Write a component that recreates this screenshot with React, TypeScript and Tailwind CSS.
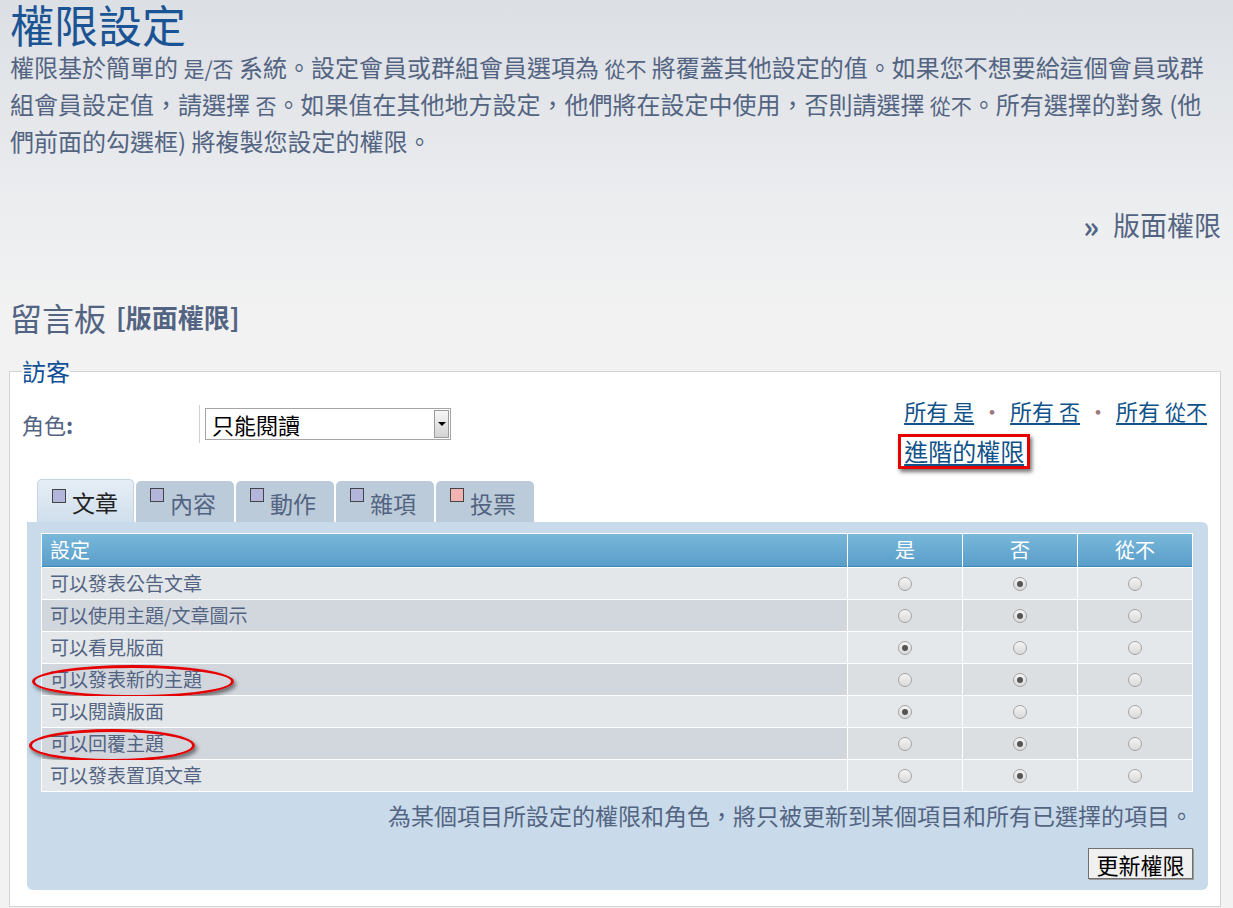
import React from "react"

const rows: { label: string; value: number; circled?: boolean }[] = [
  { label: "可以發表公告文章", value: 1 },
  { label: "可以使用主題/文章圖示", value: 1 },
  { label: "可以看見版面", value: 0 },
  { label: "可以發表新的主題", value: 1, circled: true },
  { label: "可以閱讀版面", value: 0 },
  { label: "可以回覆主題", value: 1, circled: true },
  { label: "可以發表置頂文章", value: 1 },
]

const tabs = [
  { name: "文章", color: "bg-[#b3b5da]" },
  { name: "內容", color: "bg-[#b3b5da]" },
  { name: "動作", color: "bg-[#b3b5da]" },
  { name: "雜項", color: "bg-[#b3b5da]" },
  { name: "投票", color: "bg-[#f2b3b3]" },
]

function Radio({ checked }: { checked: boolean }) {
  return (
    <span className="flex h-[14px] w-[14px] items-center justify-center rounded-full border border-[#a3a3a3] bg-[linear-gradient(to_bottom,#f4f4f4,#dadada)]">
      {checked && <span className="h-[6px] w-[6px] rounded-full bg-[#555]" />}
    </span>
  )
}

function Samp({ children }: { children: React.ReactNode }) {
  return <span className="text-[21px]">{children}</span>
}

export default function App() {
  return (
    <div className="min-h-screen bg-[linear-gradient(to_bottom,#dcdfe4_0px,#eceef0_220px,#f2f2f2_320px)] pl-[9px] pr-[12px] font-['Noto_Sans_CJK_TC','Noto_Sans',sans-serif] text-[#536482]">
      <h1 className="pl-px text-[44px] leading-[48px] text-[#1b5494]">權限設定</h1>
      <p className="mt-px pl-px text-[24px] leading-[36px]">
        權限基於簡單的 <Samp>是/否</Samp> 系統。設定會員或群組會員選項為 <Samp>從不</Samp>{" "}
        將覆蓋其他設定的值。如果您不想要給這個會員或群組會員設定值，請選擇 <Samp>否</Samp>
        。如果值在其他地方設定，他們將在設定中使用，否則請選擇 <Samp>從不</Samp>
        。所有選擇的對象 (他們前面的勾選框) 將複製您設定的權限。
      </p>

      <div className="mt-[46px] flex h-[40px] items-center justify-end text-[27px] leading-[40px]">
        <span className="mr-[14px] text-[30px] font-bold">»</span>
        <span>版面權限</span>
      </div>

      <h2 className="mt-[52px] flex h-[40px] items-center pl-px leading-[40px]">
        <span className="text-[32px]">留言板</span>
        <span className="ml-[10px] text-[26px] font-bold">[版面權限]</span>
      </h2>

      <fieldset className="mt-[21px] border border-[#d3d3d3] bg-white pb-[16px] pl-[12px] pr-[12px]">
        <legend className="text-[24px] leading-[26px] text-[#115098]">訪客</legend>

        <div className="mt-[12px] flex items-start justify-between">
          <div className="mt-[9px] flex items-center">
            <span className="w-[177px] text-[22px]">
              角色<span className="font-bold">:</span>
            </span>
            <span className="h-[38px] w-px bg-[#d0d0d0]" />
            <div className="ml-[5px] flex h-[32px] w-[246px] items-stretch border border-[#a5a5a5] bg-white">
              <span className="flex-1 pl-[6px] text-[22px] leading-[30px] text-black">只能閱讀</span>
              <span className="m-px flex w-[15px] items-center justify-center border border-[#9a9a9a] bg-[linear-gradient(to_bottom,#f6f6f6,#d4d4d4)]">
                <span className="h-0 w-0 border-x-[4px] border-t-[4px] border-x-transparent border-t-black" />
              </span>
            </div>
          </div>

          <div className="mr-px pt-px">
            <div className="flex h-[26px] items-center text-[22px] leading-[26px] text-[#105289]">
              <a className="underline underline-offset-[3px]">所有 <Samp>是</Samp></a>
              <span className="mx-[7px] text-[#9a7a80]">·</span>
              <a className="underline underline-offset-[3px]">所有 <Samp>否</Samp></a>
              <span className="mx-[7px] text-[#9a7a80]">·</span>
              <a className="underline underline-offset-[3px]">所有 <Samp>從不</Samp></a>
            </div>
            <div className="-ml-[6px] mt-[11px] inline-block border-[3px] border-[#e60000] px-[3px] shadow-[2px_3px_4px_rgba(0,0,0,0.55)]">
              <a className="text-[24px] leading-[27px] text-[#105289] underline underline-offset-[3px]">進階的權限</a>
            </div>
          </div>
        </div>

        <div className="ml-[5px]">
          <div className="mt-[10px] ml-[10px] flex items-end gap-[2px]">
            {tabs.map((t, i) => (
              <div
                key={t.name}
                className={
                  i === 0
                    ? "flex h-[43px] w-[97px] items-start rounded-t-[5px] border border-b-0 border-[#c3d3e0] bg-[linear-gradient(to_bottom,#e6eef6,#d0dfec)] pl-[14px] pt-[8px]"
                    : "flex h-[41px] w-[98px] items-start rounded-t-[5px] bg-[#bccbd9] pl-[14px] pt-[6px]"
                }
              >
                <span className={`mt-px h-[14px] w-[14px] border border-[#444] ${t.color}`} />
                <span
                  className={
                    i === 0
                      ? "ml-[6px] mt-0 text-[23px] leading-[28px] text-[#222]"
                      : "ml-[6px] mt-[2px] text-[23px] leading-[28px] text-[#536482]"
                  }
                >
                  {t.name}
                </span>
              </div>
            ))}
          </div>

          <div className="rounded-[6px] rounded-tl-none bg-[#c9dbea] pb-[11px] pl-[14px] pr-[15px] pt-[11px]">
            <div className="grid grid-cols-[1fr_114px_114px_114px] gap-px bg-white p-px">
              <div className="flex h-[33px] items-center border-b border-[#3e87b9] bg-[linear-gradient(to_bottom,#78b7da,#5a9ec9)] pl-2 text-[20px] text-white">
                設定
              </div>
              {["是", "否", "從不"].map((h) => (
                <div
                  key={h}
                  className="flex h-[33px] items-center justify-center border-b border-[#3e87b9] bg-[linear-gradient(to_bottom,#78b7da,#5a9ec9)] text-[20px] text-white"
                >
                  {h}
                </div>
              ))}
              {rows.map((r, i) => (
                <React.Fragment key={r.label}>
                  <div
                    className={`relative flex h-[31px] items-center pl-2 text-[19px] ${
                      i % 2 === 0 ? "bg-[#e3e7ea]" : "bg-[#d2d7de]"
                    }`}
                  >
                    {r.label}
                    {r.circled && (
                      <span
                        className={`absolute top-[1px] h-[33px] rounded-[50%] border-[3px] border-[#e60000] shadow-[2px_3px_4px_rgba(0,0,0,0.5)] ${
                          i === 3 ? "-left-[10px] w-[202px]" : "-left-[13px] w-[166px]"
                        }`}
                      />
                    )}
                  </div>
                  {[0, 1, 2].map((c) => (
                    <div
                      key={c}
                      className={`flex h-[31px] items-center justify-center ${
                        i % 2 === 0 ? "bg-[#e5e8eb]" : "bg-[#dcdfe2]"
                      }`}
                    >
                      <Radio checked={r.value === c} />
                    </div>
                  ))}
                </React.Fragment>
              ))}
            </div>

            <p className="mt-[8px] text-right text-[23px] leading-[30px]">
              為某個項目所設定的權限和角色，將只被更新到某個項目和所有已選擇的項目。
            </p>
            <div className="mt-[18px] flex justify-end">
              <button className="h-[31px] w-[105px] border border-[#707070] bg-[#f0f0f0] text-[22px] leading-[28px] text-black shadow-[1px_1px_0_#9a9a9a]">
                更新權限
              </button>
            </div>
          </div>
        </div>
      </fieldset>
    </div>
  )
}
